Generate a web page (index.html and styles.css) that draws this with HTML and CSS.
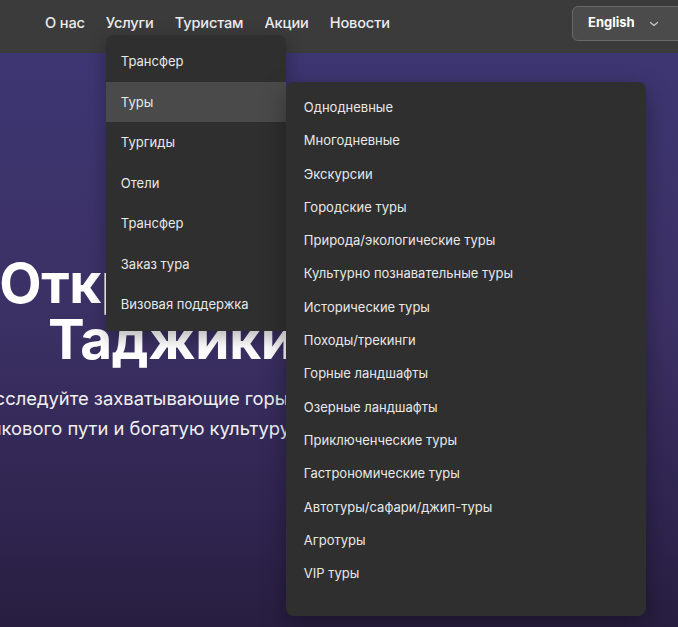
FILE: index.html
```html
<!DOCTYPE html>
<html lang="ru">
<head>
<meta charset="utf-8">
<link rel="stylesheet" href="styles.css">
</head>
<body>
<header class="header">
  <nav class="nav">
    <a class="nav-link">О нас</a>
    <div class="nav-item">
      <a class="nav-link">Услуги</a>
      <ul class="menu">
        <li class="menu-item">Трансфер</li>
        <li class="menu-item active">Туры
          <ul class="submenu">
            <li class="sub-item">Однодневные</li>
            <li class="sub-item">Многодневные</li>
            <li class="sub-item">Экскурсии</li>
            <li class="sub-item">Городские туры</li>
            <li class="sub-item">Природа/экологические туры</li>
            <li class="sub-item">Культурно познавательные туры</li>
            <li class="sub-item">Исторические туры</li>
            <li class="sub-item">Походы/трекинги</li>
            <li class="sub-item">Горные ландшафты</li>
            <li class="sub-item">Озерные ландшафты</li>
            <li class="sub-item">Приключенческие туры</li>
            <li class="sub-item">Гастрономические туры</li>
            <li class="sub-item">Автотуры/сафари/джип-туры</li>
            <li class="sub-item">Агротуры</li>
            <li class="sub-item">VIP туры</li>
          </ul>
        </li>
        <li class="menu-item">Тургиды</li>
        <li class="menu-item">Отели</li>
        <li class="menu-item">Трансфер</li>
        <li class="menu-item">Заказ тура</li>
        <li class="menu-item">Визовая поддержка</li>
      </ul>
    </div>
    <a class="nav-link">Туристам</a>
    <a class="nav-link">Акции</a>
    <a class="nav-link">Новости</a>
  </nav>
  <button class="lang">English
    <svg class="chev" width="10" height="6" viewBox="0 0 10 6"><path d="M1.5 1.5 L5 4.5 L8.5 1.5" fill="none" stroke="#c8c8c8" stroke-width="1.2" stroke-linecap="round" stroke-linejoin="round"/></svg>
  </button>
</header>
<section class="hero">
  <div class="hero-content">
    <h1 class="hero-title">Откройте для вас<br>Таджикистан</h1>
  </div>
  <div class="hero-text">
    <p class="hero-sub">Исследуйте захватывающие горы Памира, древние города<br>Шелкового пути и богатую культуру этой удивительной страны</p>
  </div>
</section>
</body>
</html>
```

FILE: styles.css
```css
* { box-sizing: border-box; }
html, body {
  margin: 0;
  padding: 0;
  width: 678px;
  height: 627px;
  overflow: hidden;
  font-family: Inter, "Noto Sans", sans-serif;
  background: #2c2347;
}
.header {
  height: 53px;
  background: #3b3b3b;
  display: flex;
  align-items: flex-start;
  justify-content: space-between;
  padding-left: 45px;
  position: relative;
  z-index: 10;
}
.nav {
  display: flex;
  gap: 21px;
  height: 46px;
  align-items: center;
}
.nav-item { position: relative; height: 100%; display: flex; align-items: center; }
.nav-link {
  color: #ececec;
  font-size: 14.6px;
  font-weight: 500;
  letter-spacing: -0.15px;
  text-decoration: none;
}
.menu {
  position: absolute;
  left: 0;
  top: 35px;
  width: 180px;
  margin: 0;
  padding: 6px 0;
  list-style: none;
  background: #2f2f2f;
  border-radius: 8px 8px 0 0;
  box-shadow: 0 6px 18px rgba(0,0,0,0.3);
}
.menu-item {
  position: relative;
  padding: 12px 15px;
  line-height: 16.5px;
  font-size: 13px;
  color: #e8e8e8;
}
.menu-item.active { background: #4a4a4a; }
.submenu {
  position: absolute;
  left: 180px;
  top: 0;
  width: 360px;
  margin: 0;
  padding: 9.5px 0 26px;
  list-style: none;
  background: #2f2f2f;
  border-radius: 8px;
  box-shadow: 0 8px 24px rgba(0,0,0,0.35);
}
.sub-item {
  padding: 8px 18px;
  line-height: 17.3px;
  font-size: 13px;
  color: #e8e8e8;
  white-space: nowrap;
}
.lang {
  margin-top: 6px;
  width: 120px;
  height: 35px;
  margin-right: -14px;
  background: #4b4b4b;
  border: 1px solid #686868;
  border-radius: 6px;
  color: #fff;
  font-family: inherit;
  font-size: 13px;
  font-weight: 700;
  display: flex;
  align-items: center;
  padding: 0 0 3px 15px;
  gap: 14px;
}
.chev { margin-top: 3px; }
.hero {
  height: 574px;
  background: linear-gradient(180deg, #3d3672 0%, #3c3165 45%, #2f2550 80%, #281e40 100%);
  position: relative;
  overflow: hidden;
}
.hero-content {
  width: 500px;
  margin-left: -16.5px;
  padding-top: 202px;
  text-align: center;
  color: #fff;
}
.hero-title {
  margin: 0;
  font-size: 55px;
  font-weight: 700;
  line-height: 56px;
  letter-spacing: -0.4px;
  word-spacing: -7px;
  white-space: nowrap;
}
.hero-text {
  width: 500px;
  margin-left: 0;
  padding-top: 16px;
  display: flex;
  justify-content: center;
  color: #f0f0f0;
}
.hero-sub {
  margin: 0;
  font-size: 18.4px;
  line-height: 30px;
  text-align: center;
  white-space: nowrap;
}
```
